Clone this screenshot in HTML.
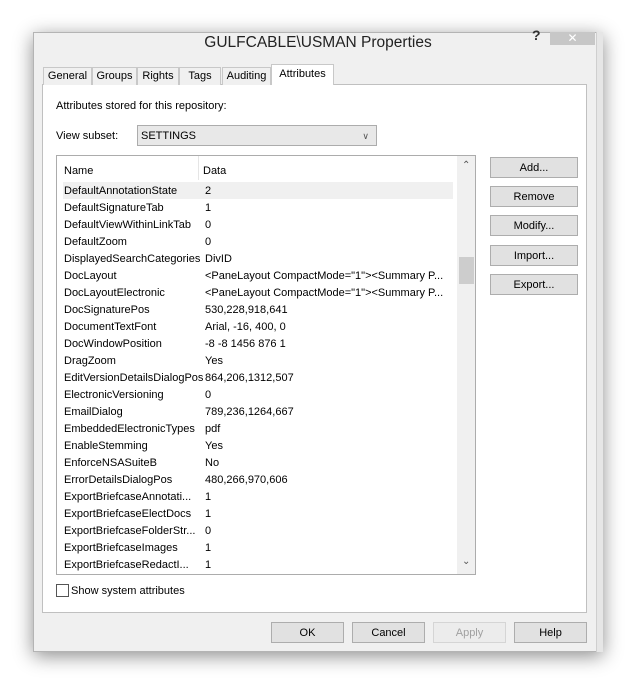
<!DOCTYPE html>
<html><head><style>
*{margin:0;padding:0;box-sizing:border-box}
body{width:635px;height:684px;background:#fff;position:relative;font-family:"Liberation Sans",sans-serif;font-size:11px;color:#000;overflow:hidden}
.abs{position:absolute}
.win{left:33px;top:32px;width:570px;height:620px;background:#f0f0f0;border:1px solid #b4b4b4;box-shadow:0 4px 18px rgba(0,0,0,.45)}
.tab{top:67px;height:18px;border:1px solid #c8c8c8;border-bottom:none;background:#f0f0f0;text-align:center;line-height:17px;font-size:11px}
.panel{left:42px;top:84px;width:545px;height:529px;background:#fff;border:1px solid #c0c0c0}
.btn{background:#e1e1e1;border:1px solid #adadad;text-align:center;line-height:20px;height:21px}
.row{position:absolute;left:7px;height:17px;line-height:17px;white-space:nowrap}
.row span{position:absolute;left:141px}
</style></head><body>
<div class="abs win"></div>
<div class="abs" style="left:33px;top:32px;width:570px;height:26px;text-align:center;font-size:15.5px;line-height:22px;color:#222;padding-top:0px">GULFCABLE\USMAN Properties</div>
<div class="abs" style="left:532px;top:27px;font-size:14px;font-weight:bold;color:#333">?</div>
<div class="abs" style="left:550px;top:32px;width:45px;height:13px;background:#c7c7c7;color:#fff;text-align:center;font-size:12px;line-height:13px">✕</div>
<div class="abs" style="left:596px;top:32px;width:7px;height:620px;background:#e6e6e6;border-left:1px solid #cfcfcf"></div>
<div class="abs panel"></div>
<div class="abs tab" style="left:43px;width:49px">General</div>
<div class="abs tab" style="left:92px;width:45px">Groups</div>
<div class="abs tab" style="left:137px;width:42px">Rights</div>
<div class="abs tab" style="left:179px;width:42px">Tags</div>
<div class="abs tab" style="left:222px;width:49px">Auditing</div>
<div class="abs tab" style="left:271px;top:64px;width:63px;height:21px;background:#fff;line-height:18px">Attributes</div>
<div class="abs" style="left:56px;top:100px">Attributes stored for this repository:</div>
<div class="abs" style="left:56px;top:130px">View subset:</div>
<div class="abs" style="left:137px;top:125px;width:240px;height:21px;border:1px solid #acacac;background:#e8e8e8;line-height:20px;padding-left:3px">SETTINGS<span style="position:absolute;right:7px;top:0;font-size:9px;color:#555">&#8744;</span></div>
<div class="abs" style="left:56px;top:155px;width:420px;height:420px;border:1px solid #acacac;background:#fff;overflow:hidden">
<div class="row" style="top:7px"><span style="left:139px">Data</span>Name</div>
<div class="abs" style="left:141px;top:0;width:1px;height:24px;background:#e5e5e5"></div>
<div class="abs" style="left:6px;top:26px;width:390px;height:17px;background:#f0f0f0"></div>
<div class="abs" style="left:400px;top:0;width:19px;height:418px;background:#f0f0f0"></div>
<div class="abs" style="left:405px;top:4px;font-size:10px;color:#555">&#8963;</div>
<div class="abs" style="left:405px;top:400px;font-size:10px;color:#555">&#8964;</div>
<div class="abs" style="left:402px;top:101px;width:15px;height:27px;background:#cdcdcd"></div>
<div class="row" style="top:27px">DefaultAnnotationState<span>2</span></div>
<div class="row" style="top:44px">DefaultSignatureTab<span>1</span></div>
<div class="row" style="top:61px">DefaultViewWithinLinkTab<span>0</span></div>
<div class="row" style="top:78px">DefaultZoom<span>0</span></div>
<div class="row" style="top:95px">DisplayedSearchCategories<span>DivID</span></div>
<div class="row" style="top:112px">DocLayout<span>&lt;PaneLayout CompactMode="1"&gt;&lt;Summary P...</span></div>
<div class="row" style="top:129px">DocLayoutElectronic<span>&lt;PaneLayout CompactMode="1"&gt;&lt;Summary P...</span></div>
<div class="row" style="top:146px">DocSignaturePos<span>530,228,918,641</span></div>
<div class="row" style="top:163px">DocumentTextFont<span>Arial, -16, 400, 0</span></div>
<div class="row" style="top:180px">DocWindowPosition<span>-8 -8 1456 876 1</span></div>
<div class="row" style="top:197px">DragZoom<span>Yes</span></div>
<div class="row" style="top:214px">EditVersionDetailsDialogPos<span>864,206,1312,507</span></div>
<div class="row" style="top:231px">ElectronicVersioning<span>0</span></div>
<div class="row" style="top:248px">EmailDialog<span>789,236,1264,667</span></div>
<div class="row" style="top:265px">EmbeddedElectronicTypes<span>pdf</span></div>
<div class="row" style="top:282px">EnableStemming<span>Yes</span></div>
<div class="row" style="top:299px">EnforceNSASuiteB<span>No</span></div>
<div class="row" style="top:316px">ErrorDetailsDialogPos<span>480,266,970,606</span></div>
<div class="row" style="top:333px">ExportBriefcaseAnnotati...<span>1</span></div>
<div class="row" style="top:350px">ExportBriefcaseElectDocs<span>1</span></div>
<div class="row" style="top:367px">ExportBriefcaseFolderStr...<span>0</span></div>
<div class="row" style="top:384px">ExportBriefcaseImages<span>1</span></div>
<div class="row" style="top:401px">ExportBriefcaseRedactI...<span>1</span></div>
</div>
<div class="abs btn" style="left:490px;top:157px;width:88px">Add...</div>
<div class="abs btn" style="left:490px;top:186px;width:88px">Remove</div>
<div class="abs btn" style="left:490px;top:215px;width:88px">Modify...</div>
<div class="abs btn" style="left:490px;top:245px;width:88px">Import...</div>
<div class="abs btn" style="left:490px;top:274px;width:88px">Export...</div>
<div class="abs" style="left:56px;top:584px;width:13px;height:13px;border:1px solid #555;background:#fff"></div>
<div class="abs" style="left:71px;top:585px">Show system attributes</div>
<div class="abs btn" style="left:271px;top:622px;width:73px">OK</div>
<div class="abs btn" style="left:352px;top:622px;width:73px">Cancel</div>
<div class="abs btn" style="left:433px;top:622px;width:73px;color:#a0a0a0;background:#ececec;border-color:#d5d5d5">Apply</div>
<div class="abs btn" style="left:514px;top:622px;width:73px">Help</div>
</body></html>
